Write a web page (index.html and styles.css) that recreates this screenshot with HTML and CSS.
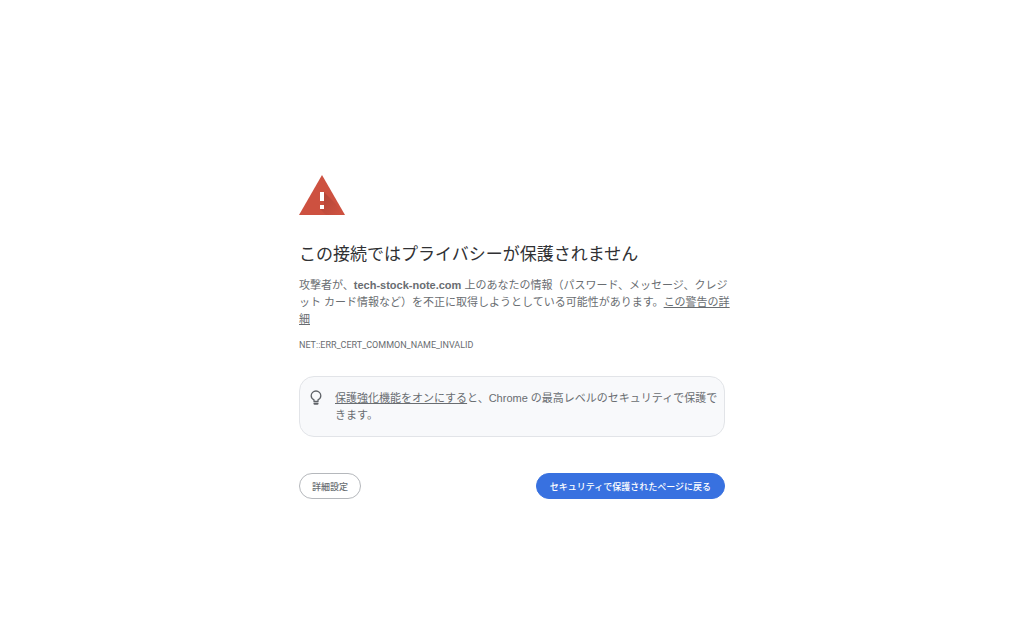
FILE: index.html
```html
<!DOCTYPE html>
<html lang="ja">
<head>
    <meta charset="UTF-8">
    <meta name="viewport" content="width=device-width, initial-scale=1.0">
    <title>プライバシー エラー</title>
    <link rel="stylesheet" href="styles.css">
</head>
<body>
    <main class="interstitial">
        <svg class="warning-icon" viewBox="0 0 46 40" aria-hidden="true">
            <defs>
                <linearGradient id="shadow" x1="0" y1="0" x2="1" y2="1">
                    <stop offset="0.2" stop-color="#b54739"/>
                    <stop offset="0.9" stop-color="#cd5140"/>
                </linearGradient>
            </defs>
            <path d="M23 0 46 40H0Z" fill="#cd5140"/>
            <path d="M25 17 37 29 43 40H27L21 34h4Z" fill="url(#shadow)"/>
            <path d="M21 17h4v9h-4zM21 30h4v4h-4z" fill="#fff"/>
        </svg>

        <h1>この接続ではプライバシーが保護されません</h1>
        <p class="message">攻撃者が、<strong>tech-stock-note.com</strong> 上のあなたの情報（パスワード、メッセージ、クレジット カード情報など）を不正に取得しようとしている可能性があります。<a href="#">この警告の詳細</a></p>
        <div class="error-code">NET::ERR_CERT_COMMON_NAME_INVALID</div>

        <!-- 保護強化機能の案内 -->
        <div class="tip">
            <svg class="tip-icon" viewBox="0 0 12 16" aria-hidden="true">
                <path d="M4 11.500v-1.600C2.200 9 1.200 7.600 1.200 5.800a4.800 4.800 0 0 1 9.600 0C10.800 7.600 9.800 9 8 9.900v1.600Z" fill="none" stroke="#5f6368" stroke-width="1.300" stroke-linejoin="round"/>
                <path d="M3.500 12.800h5v.8a1.200 1.200 0 0 1-1.200 1.200H4.700a1.200 1.200 0 0 1-1.200-1.200z" fill="#5f6368"/>
            </svg>
            <p><a href="#">保護強化機能をオンにする</a>と、Chrome の最高レベルのセキュリティで保護できます。</p>
        </div>

        <div class="buttons">
            <button type="button" class="button secondary">詳細設定</button>
            <button type="button" class="button primary">セキュリティで保護されたページに戻る</button>
        </div>
    </main>
</body>
</html>
```
FILE: styles.css
```css
* {
    margin: 0;
    padding: 0;
    box-sizing: border-box;
}

body {
    background-color: #fff;
    color: #696d71;
    font-family: "Liberation Sans", "Noto Sans CJK JP", sans-serif;
    font-size: 11px;
    line-height: 17px;
    padding: 175px 16px 48px;
}

.interstitial {
    max-width: 426px;
    margin: 0 auto;
}

.warning-icon {
    display: block;
    width: 46px;
    height: 40px;
    margin-bottom: 28px;
}

h1 {
    color: #303134;
    font-size: 17px;
    font-weight: 400;
    line-height: 24px;
    margin-bottom: 10px;
}

a {
    color: inherit;
    text-decoration: underline;
}

.message {
    margin-right: -8px;
    margin-bottom: 9px;
}

.error-code {
    font-family: Roboto, sans-serif;
    font-size: 9px;
}

.tip {
    display: flex;
    gap: 13px;
    margin-top: 22px;
    padding: 13px 4px 12px 10px;
    background-color: #f8f9fb;
    border: 1px solid #e2e4e8;
    border-radius: 15px;
}

.tip-icon {
    flex: none;
    width: 12px;
    height: 16px;
}

.buttons {
    display: flex;
    flex-wrap: wrap;
    justify-content: space-between;
    gap: 12px;
    margin-top: 36px;
}

.button {
    height: 26px;
    padding: 0 12px;
    border-radius: 13px;
    font-family: inherit;
    font-size: 9px;
    font-weight: 500;
    cursor: pointer;
}

.secondary {
    background-color: #fff;
    border: 1px solid #b5b8bc;
    color: #696d71;
}

.primary {
    padding: 0 13px;
    background-color: #3871e0;
    border: 1px solid #3871e0;
    color: #fff;
}
```
